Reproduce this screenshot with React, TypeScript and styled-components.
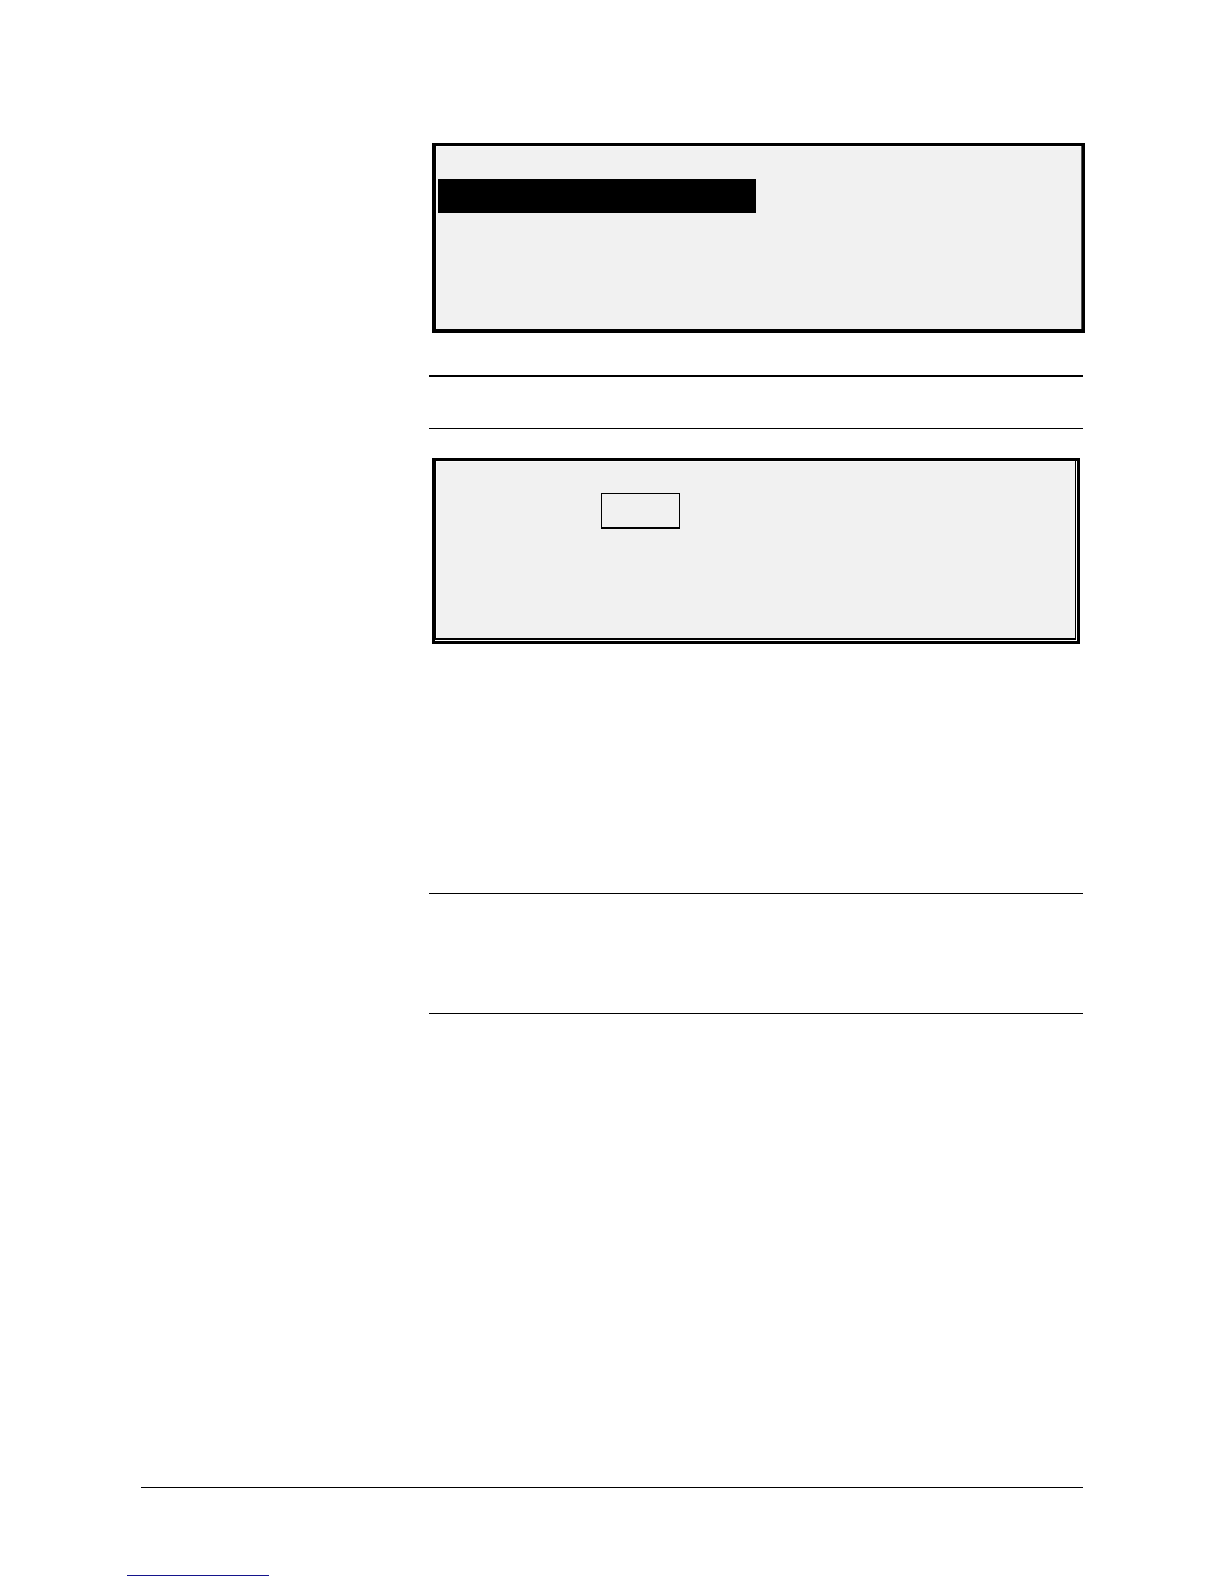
import React from "react";
import styled, { createGlobalStyle } from "styled-components";

const GlobalStyle = createGlobalStyle`
  *, *::before, *::after { box-sizing: border-box; }
  body {
    margin: 0;
    background: #fff;
    color: #000;
    font-family: "Liberation Sans", Arial, sans-serif;
  }
`;

const Page = styled.div`
  display: flex;
  flex-direction: column;
  min-height: 100vh;
  padding: 143px 141px 8px;
`;

const Column = styled.main`
  display: flex;
  flex-direction: column;
  flex: 1;
  margin-left: 288px;
`;

const Rule = styled.hr`
  width: 100%;
  height: 1px;
  margin: 0;
  border: 0;
  background: #000;
`;

const MenuScreen = styled.section`
  min-height: 190px;
  margin: 0 -2px 0 3px;
  padding: 33px 2px;
  border: solid #000;
  border-width: 3px 3px 4px 4px;
  background: #f1f1f1;
  box-shadow: inset -1px 0 #555, inset 1px 1px #fafafa;
`;

const SelectedLine = styled.div`
  width: 318px;
  max-width: 100%;
  height: 34px;
  background: #000;
`;

const EntryScreen = styled.section`
  display: flex;
  min-height: 186px;
  margin: 29px 3px 0;
  border: 3px solid #000;
  padding: 0 1px 1px 0;
  background: #fff;
`;

const EntryArea = styled.div`
  flex: 1;
  padding: 32px 165px;
  border: solid #000;
  border-width: 0 1px 2px 1px;
  background: #f1f1f1;
  box-shadow: inset 1px 1px #fafafa;
`;

const EntryField = styled.input`
  display: block;
  width: 79px;
  height: 36px;
  padding: 0 8px;
  border: solid #000;
  border-width: 1px 1px 2px;
  border-radius: 0;
  background: transparent;
  font: 16px "Liberation Sans", Arial, sans-serif;
`;

const Note = styled.section<{ $height: number; $space: number; $topWeight?: number }>`
  min-height: ${({ $height }) => $height}px;
  margin-top: ${({ $space }) => $space}px;
  border-top: ${({ $topWeight = 1 }) => $topWeight}px solid #000;
  border-bottom: 1px solid #000;
`;

const Footer = styled.footer`
  display: flex;
  flex-direction: column;
`;

const FooterLink = styled.a`
  width: 142px;
  height: 24px;
  margin: 64px 0 0 -14px;
  border-bottom: 1px solid #14148c;
`;

export default function App() {
  return (
    <>
      <GlobalStyle />
      <Page>
        <Column>
          <MenuScreen>
            <SelectedLine />
          </MenuScreen>
          <Note $height={54} $space={42} $topWeight={2} />
          <EntryScreen>
            <EntryArea>
              <EntryField type="text" aria-label="Value" />
            </EntryArea>
          </EntryScreen>
          <Note $height={121} $space={249} />
        </Column>
        <Footer>
          <Rule />
          <FooterLink href="#" aria-label="Home" />
        </Footer>
      </Page>
    </>
  );
}
